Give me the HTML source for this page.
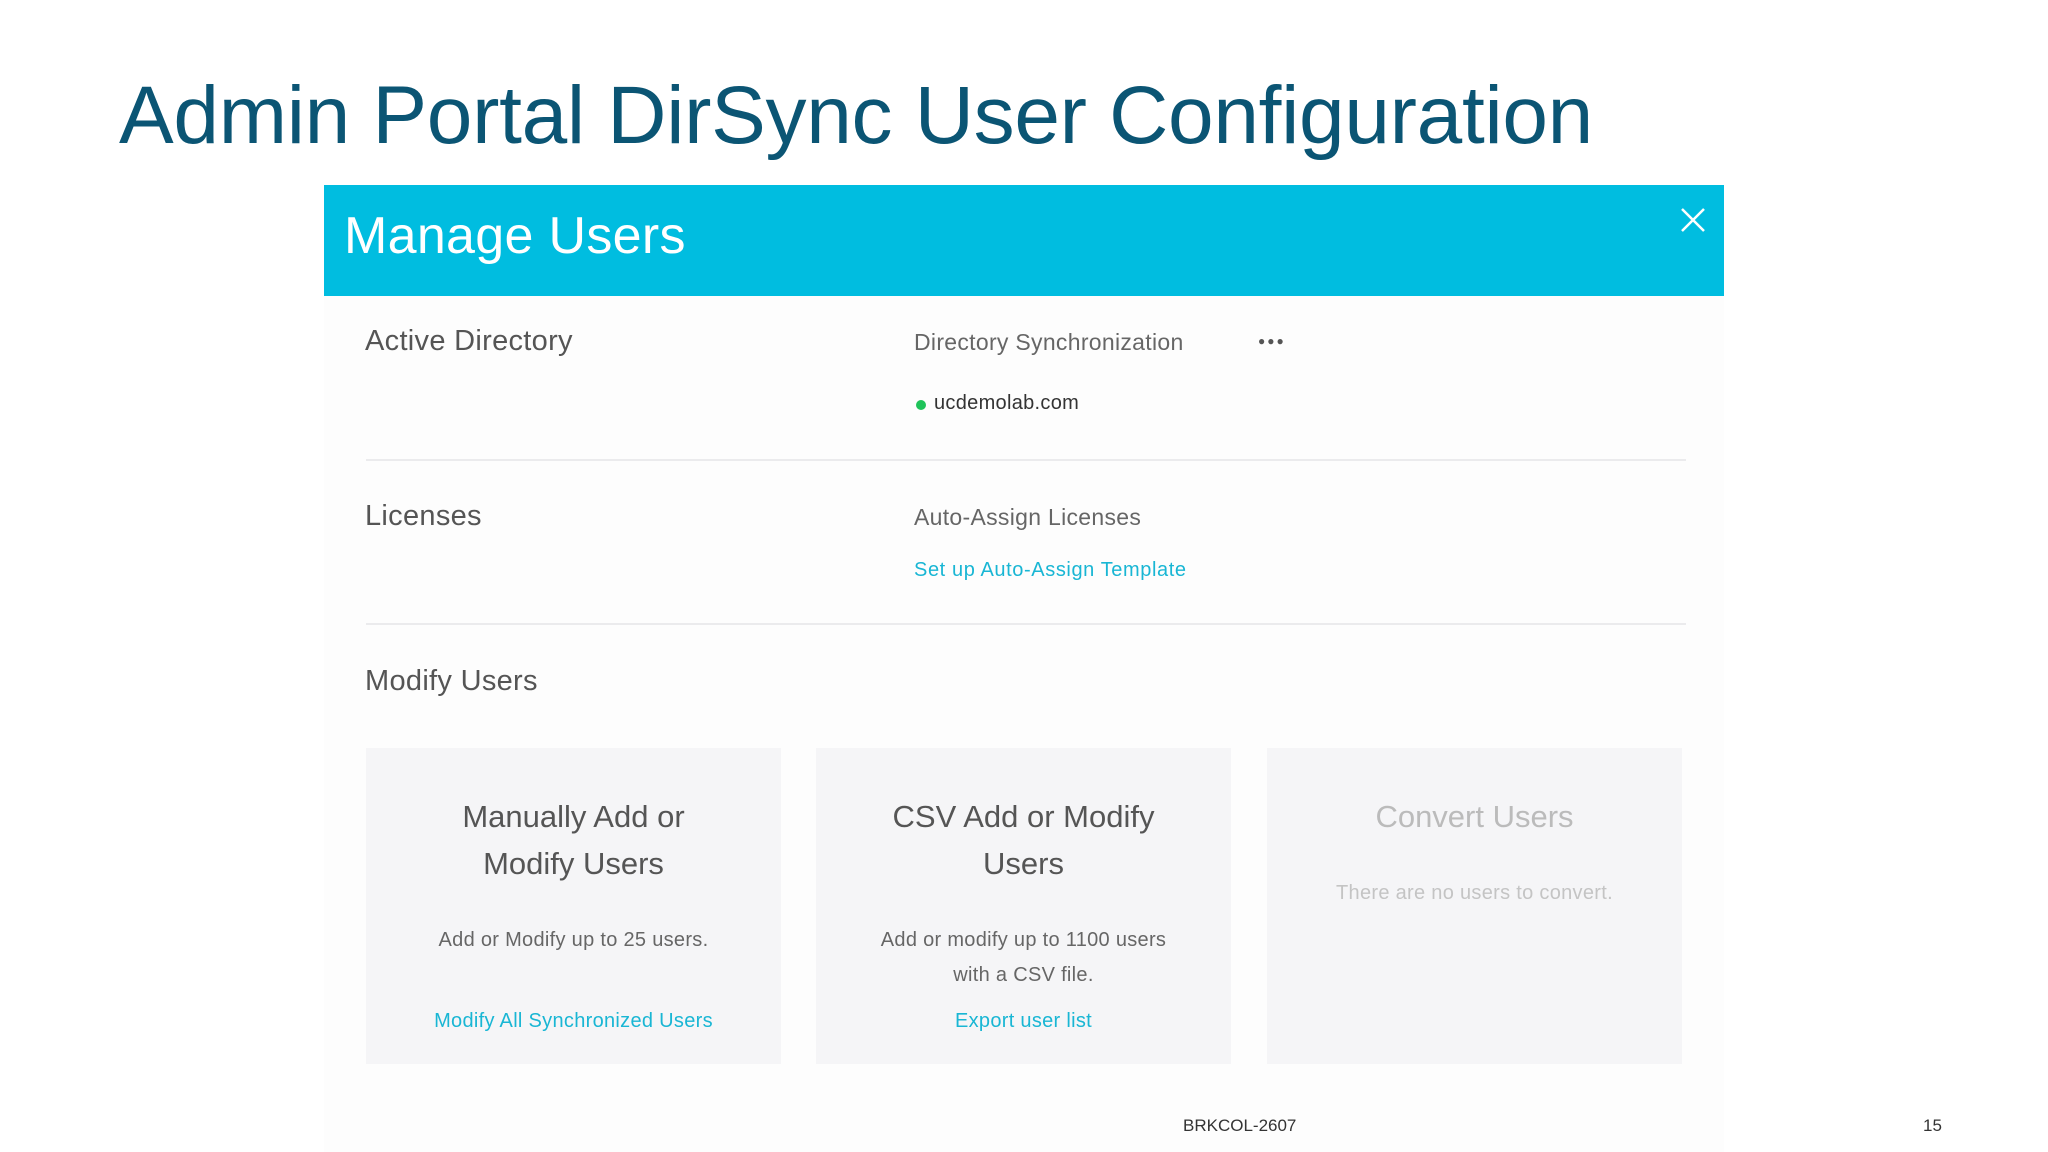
<!DOCTYPE html>
<html><head><meta charset="utf-8"><style>
*{margin:0;padding:0;box-sizing:border-box}
body{width:2048px;height:1152px;background:#fff;font-family:"Liberation Sans",sans-serif;position:relative;overflow:hidden}
.a{position:absolute;white-space:nowrap}
.panel{position:absolute;left:324px;top:185px;width:1400px;height:967px;background:#fdfdfd}
.hdr{position:absolute;left:324px;top:185px;width:1400px;height:111px;background:#00bde0}
.hr{position:absolute;left:366px;width:1320px;height:2px;background:#ebebed}
.card{position:absolute;top:748px;width:415px;height:316px;background:#f5f5f7;text-align:center}
.ct{position:absolute;left:0;width:100%;font-size:31px;color:#555;line-height:47px;top:45px}
.cd{position:absolute;left:0;width:100%;font-size:20px;color:#666;line-height:35px;letter-spacing:0.3px}
.cl{position:absolute;left:0;width:100%;font-size:20px;color:#19b6d4;top:1010px;letter-spacing:0.3px}
</style></head><body>
<div class="a" style="left:119px;top:69px;font-size:82px;color:#0b5574;letter-spacing:-0.3px">Admin Portal DirSync User Configuration</div>
<div class="panel"></div>
<div class="hdr"></div>
<div class="a" style="left:344px;top:206px;font-size:52px;color:#fff;letter-spacing:0.3px">Manage Users</div>
<svg class="a" style="left:1680px;top:207px" width="26" height="26" viewBox="0 0 26 26"><path d="M2 2L24 24M24 2L2 24" stroke="#fff" stroke-width="2.5"/></svg>
<div class="a" style="left:365px;top:325px;font-size:29px;color:#555;letter-spacing:0.3px">Active Directory</div>
<div class="a" style="left:914px;top:329px;font-size:23px;color:#666;letter-spacing:0.3px">Directory Synchronization</div>
<div class="a" style="left:1258px;top:334px;font-size:12px;color:#555;letter-spacing:2px">●●●</div>
<div class="a" style="left:916px;top:400px;width:10px;height:10px;border-radius:50%;background:#1fc35a"></div>
<div class="a" style="left:934px;top:392px;font-size:20px;color:#333;letter-spacing:0.3px">ucdemolab.com</div>
<div class="hr" style="top:459px"></div>
<div class="a" style="left:365px;top:500px;font-size:29px;color:#555;letter-spacing:0.3px">Licenses</div>
<div class="a" style="left:914px;top:504px;font-size:23px;color:#666;letter-spacing:0.3px">Auto-Assign Licenses</div>
<div class="a" style="left:914px;top:559px;font-size:20px;color:#19b6d4;letter-spacing:0.6px;font-weight:500">Set up Auto-Assign Template</div>
<div class="hr" style="top:623px"></div>
<div class="a" style="left:365px;top:665px;font-size:29px;color:#555;letter-spacing:0.3px">Modify Users</div>
<div class="card" style="left:366px"><div class="ct">Manually Add or<br>Modify Users</div><div class="cd" style="top:175px">Add or Modify up to 25 users.</div><div class="cl" style="top:262px">Modify All Synchronized Users</div></div>
<div class="card" style="left:816px"><div class="ct">CSV Add or Modify<br>Users</div><div class="cd" style="top:175px">Add or modify up to 1100 users<br>with a CSV file.</div><div class="cl" style="top:262px">Export user list</div></div>
<div class="card" style="left:1267px"><div class="ct" style="color:#bbb">Convert Users</div><div class="cd" style="top:128px;color:#c4c4c4">There are no users to convert.</div></div>
<div class="a" style="left:1183px;top:1116px;font-size:17px;color:#333">BRKCOL-2607</div>
<div class="a" style="left:1923px;top:1116px;font-size:17px;color:#333">15</div>
</body></html>
